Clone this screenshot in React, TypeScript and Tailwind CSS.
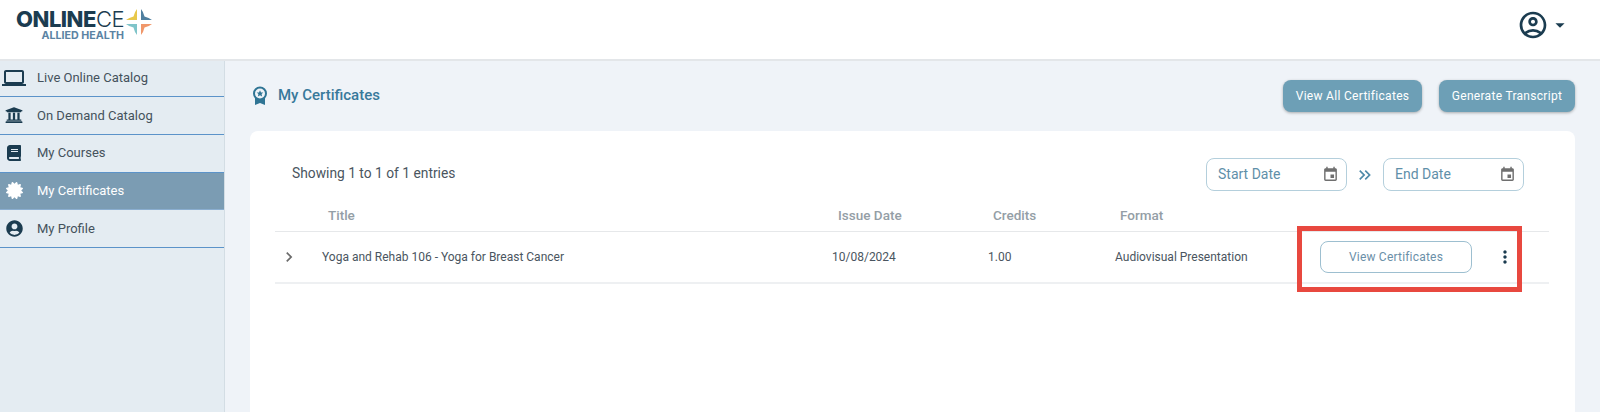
import { FaBook, FaCertificate, FaUniversity, FaUserCircle } from 'react-icons/fa';
import {
    MdArrowDropDown,
    MdChevronRight,
    MdEvent,
    MdKeyboardDoubleArrowRight,
    MdLaptop,
    MdMoreVert,
    MdOutlineAccountCircle,
} from 'react-icons/md';

const navItems = [
    { label: 'Live Online Catalog', icon: <MdLaptop className="text-[24px]" /> },
    { label: 'On Demand Catalog', icon: <FaUniversity className="text-[18px]" /> },
    { label: 'My Courses', icon: <FaBook className="text-[16px]" /> },
    { label: 'My Certificates', icon: <FaCertificate className="text-[17px]" />, active: true },
    { label: 'My Profile', icon: <FaUserCircle className="text-[17px]" /> },
];

function Logo() {
    return (
        <div className="flex items-start ml-[15px] mt-[9px]">
            <div className="flex flex-col items-end w-[109px]">
                <div className="h-[20px] leading-[20px] text-[22px] text-[#1b3c50] font-['Inter',sans-serif] whitespace-nowrap tracking-[-0.5px]">
                    <span className="font-extrabold">ONLINE</span>
                    <span className="font-light">CE</span>
                </div>
                <div className="h-[10px] leading-[10px] mt-[2px] text-[10.7px] font-bold text-[#5b83a3] font-['Inter',sans-serif] whitespace-nowrap">
                    ALLIED HEALTH
                </div>
            </div>
            <svg width="26" height="26" viewBox="0 0 26 26" className="ml-[2px]">
                <path d="M11 0V11H0Q3 8.500 7.500 7.500Q8.500 3 11 0z" fill="#e8c84a" />
                <path d="M15 0V11H26Q23 8.500 18.500 7.500Q17.500 3 15 0z" fill="#4f7f9f" />
                <path d="M0 15H11V26Q8.500 23 7.500 18.500Q3 17.500 0 15z" fill="#7fc4c9" />
                <path d="M26 15H15V26Q17.500 23 18.500 18.500Q23 17.500 26 15z" fill="#f0976a" />
            </svg>
        </div>
    );
}

function Sidebar() {
    return (
        <aside className="w-[225px] shrink-0 bg-[#e4ecf2] border-r border-[#d3dde4]">
            {navItems.map(item => (
                <div
                    key={item.label}
                    className={`h-[37.8px] first:h-[36px] first:pb-[1px] flex items-center border-b text-[13px] ${
                        item.active
                            ? 'bg-[#7b9cb3] border-[#8aaed0] text-white'
                            : 'border-[#5b93c9] text-[#44525c]'
                    }`}
                >
                    <span className={`w-[28px] flex justify-center ${item.active ? 'text-white' : 'text-[#1b3c50]'}`}>
                        {item.icon}
                    </span>
                    <span className="ml-[9px]">{item.label}</span>
                </div>
            ))}
        </aside>
    );
}

function DateInput({ label }: { label: string }) {
    return (
        <div className="w-[141px] h-[33px] rounded-lg border border-[#b4cfdc] bg-white flex items-center justify-between pl-[11px] pr-[7px]">
            <span className="text-[14px] text-[#5f8fa9]">{label}</span>
            <MdEvent className="text-[17px] text-[#6f6f6f]" />
        </div>
    );
}

function CertificatesTable() {
    return (
        <div className="text-[12px] mt-[12px]">
            <div className="h-[29px] pb-[3px] flex items-center border-b border-[#e6e8ea] font-medium text-[13.5px] text-[#949ea6]">
                <span className="ml-[53px] w-[510px]">Title</span>
                <span className="w-[155px]">Issue Date</span>
                <span className="w-[127px]">Credits</span>
                <span>Format</span>
            </div>
            <div className="h-[52px] flex items-center border-b-2 border-[#eef0f2] text-[#4a5560]">
                <MdChevronRight className="ml-[3px] w-[22px] text-[20px] text-[#6b6b6b]" />
                <span className="ml-[22px] w-[510px]">Yoga and Rehab 106 - Yoga for Breast Cancer</span>
                <span className="w-[156px]">10/08/2024</span>
                <span className="w-[127px]">1.00</span>
                <span className="w-[205px]">Audiovisual Presentation</span>
                <button className="w-[152px] h-[32px] rounded-lg border border-[#9dbfd0] bg-white text-[#6b8fa8] tracking-[0.2px]">
                    View Certificates
                </button>
                <MdMoreVert className="ml-[23px] text-[20px] text-[#1b3c50]" />
            </div>
        </div>
    );
}

export default function App() {
    return (
        <div className="w-[1600px] h-[412px] overflow-hidden flex flex-col bg-[#eff3f8] font-['Roboto',sans-serif]">
            <header className="h-[61px] shrink-0 bg-white border-b-2 border-[#e3e6e9] flex justify-between">
                <Logo />
                <div className="flex items-center mr-[29px] mb-[10px] text-[#1b3c50]">
                    <MdOutlineAccountCircle className="text-[32px]" />
                    <MdArrowDropDown className="text-[22px]" />
                </div>
            </header>
            <div className="flex flex-1 min-h-0">
                <Sidebar />
                <main className="flex-1 pl-[25px] pr-[25px]">
                    <div className="h-[70px] flex items-center justify-between pb-[1px]">
                        <div className="flex items-center">
                            <svg width="16" height="20" viewBox="0 0 16 20" fill="none" className="ml-[2px]">
                                <path d="M3 12v7l5-2 5 2v-7z" fill="#2f7494" />
                                <circle cx="8" cy="7.5" r="6" fill="#eff3f8" stroke="#2f7494" strokeWidth="2" />
                                <path d="M8 4.2l1 2.2 2.3.2-1.7 1.5.5 2.3-2.1-1.2-2.1 1.2.5-2.3-1.7-1.5 2.3-.2z" fill="#2f7494" />
                            </svg>
                            <h1 className="ml-[10px] text-[15px] font-medium text-[#38799b]">My Certificates</h1>
                        </div>
                        <div className="flex gap-[17px] text-[12px] text-white tracking-[0.3px]">
                            <button className="w-[139px] h-[32px] rounded-lg bg-[#6d9fb6] shadow-[0_1px_3px_rgba(0,0,0,0.3)]">
                                View All Certificates
                            </button>
                            <button className="w-[136px] h-[32px] rounded-lg bg-[#6d9fb6] shadow-[0_1px_3px_rgba(0,0,0,0.3)]">
                                Generate Transcript
                            </button>
                        </div>
                    </div>
                    <section className="h-[300px] bg-white rounded-t-lg pt-[27px] pl-[25px] pr-[26px]">
                        <div className="flex items-center justify-between pl-[17px] pr-[25px]">
                            <span className="text-[13.8px] text-[#4a5560] pb-[2px]">Showing 1 to 1 of 1 entries</span>
                            <div className="flex items-center">
                                <DateInput label="Start Date" />
                                <MdKeyboardDoubleArrowRight className="mx-[8px] text-[20px] text-[#4d8aa9]" />
                                <DateInput label="End Date" />
                            </div>
                        </div>
                        <CertificatesTable />
                    </section>
                </main>
            </div>
            {/* red highlight box drawn over the row */}
            <div className="absolute left-[1297px] top-[226px] w-[225px] h-[66px] border-[5px] border-[#e8483f]" />
        </div>
    );
}
